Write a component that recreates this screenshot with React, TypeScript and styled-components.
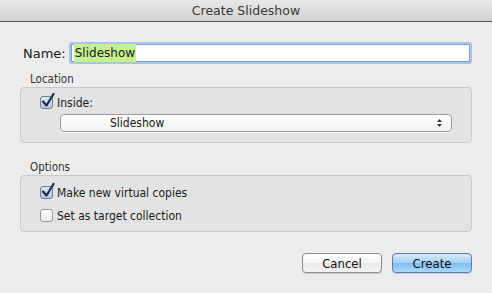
import { useState } from "react";
import styled, { createGlobalStyle } from "styled-components";

const GlobalStyle = createGlobalStyle`
  html, body {
    margin: 0;
    padding: 0;
    background: #ececec;
  }
  body {
    font-family: "DejaVu Sans Condensed", "Liberation Sans", sans-serif;
    font-size: 12px;
    color: #1a1a1a;
  }
`;

const Window = styled.div`
  width: 492px;
  height: 293px;
  background: #ececec;
  display: flex;
  flex-direction: column;
  overflow: hidden;
`;

const TitleBar = styled.div`
  height: 21px;
  border-bottom: 1px solid #555;
  background: linear-gradient(#e9e9e9, #d2d2d2);
  display: flex;
  align-items: center;
  justify-content: center;
  font-family: "DejaVu Sans", sans-serif;
  font-size: 12.5px;
  color: #3a3a3a;
`;

const Body = styled.div`
  padding: 20px 20px 0 20px;
  display: flex;
  flex-direction: column;
`;

const NameRow = styled.div`
  display: flex;
  align-items: center;
  gap: 5px;
  padding-left: 3px;
  height: 22px;
`;

const NameLabel = styled.label`
  font-family: "DejaVu Sans", sans-serif;
  font-size: 13px;
`;

const NameInput = styled.div`
  flex: 1;
  height: 18px;
  box-sizing: border-box;
  border: 1px solid #7d9dc8;
  box-shadow: 0 0 0 2px #a9c4e7;
  border-radius: 1px;
  background: #fff;
  display: flex;
  align-items: center;
  padding: 0 2px;
  margin-right: 2px;
  font-family: "DejaVu Sans", sans-serif;
  font-size: 12px;
`;

const Selected = styled.span`
  background: #c5f28e;
  padding: 0 1px;
  line-height: 18px;
`;

const GroupLabel = styled.div<{ $gap: number }>`
  margin: ${(p) => p.$gap}px 0 0 10px;
  font-size: 11.5px;
  color: #333;
  line-height: 14px;
`;

const GroupBox = styled.div<{ $height: number; $gap: number; $top: number }>`
  margin-top: 1px;
  height: ${(p) => p.$height}px;
  box-sizing: border-box;
  border: 1px solid #c9c9c9;
  border-radius: 4px;
  background: #e3e3e3;
  padding: ${(p) => p.$top}px 19px 0 19px;
  display: flex;
  flex-direction: column;
  gap: ${(p) => p.$gap}px;
`;

const CheckRow = styled.label`
  display: flex;
  align-items: center;
  gap: 4px;
  height: 17px;
  font-size: 12px;
  cursor: default;
`;

const Box = styled.span<{ $on: boolean }>`
  position: relative;
  width: 13px;
  height: 13px;
  box-sizing: border-box;
  border: 1px solid ${(p) => (p.$on ? "#6f8199" : "#9a9a9a")};
  border-radius: 3px;
  background: ${(p) =>
    p.$on
      ? "linear-gradient(#dbe7f5, #b5c9e2)"
      : "linear-gradient(#ffffff, #ececec)"};
  flex-shrink: 0;
`;

const Tick = styled.svg`
  position: absolute;
  left: 0px;
  top: -4px;
  width: 14px;
  height: 15px;
  overflow: visible;
`;

const Select = styled.div`
  margin-left: 20px;
  height: 18px;
  box-sizing: border-box;
  border: 1px solid #9c9c9c;
  border-radius: 4px;
  background: linear-gradient(#ffffff, #f1f1f1);
  display: flex;
  align-items: center;
  padding-left: 49px;
  padding-right: 8px;
  font-size: 12px;
  box-shadow: 0 1px 0 rgba(255, 255, 255, 0.6);
`;

const SelectText = styled.span`
  flex: 1;
`;

const Footer = styled.div`
  display: flex;
  justify-content: flex-end;
  gap: 10px;
  margin-top: 21px;
`;

const Button = styled.button<{ $primary?: boolean }>`
  width: 80px;
  height: 20px;
  box-sizing: border-box;
  border-radius: 4px;
  font-family: inherit;
  font-size: 13px;
  color: #111;
  padding: 0;
  border: 1px solid ${(p) => (p.$primary ? "#5b7fae" : "#8c8c8c")};
  background: ${(p) =>
    p.$primary
      ? "linear-gradient(#d6ebfc 0%, #a3d0f4 50%, #7fbcec 51%, #a9d8fb 100%)"
      : "linear-gradient(#ffffff 0%, #f4f4f4 50%, #e8e8e8 51%, #f4f4f4 100%)"};
  box-shadow: 0 1px 1px rgba(0, 0, 0, 0.15);
`;

const Check = ({ on, label, onToggle }: { on: boolean; label: string; onToggle: () => void }) => (
  <CheckRow onClick={onToggle}>
    <Box $on={on}>
      {on && (
        <Tick viewBox="0 0 14 15">
          <path
            d="M2 8.5 L5.5 12.5 L12.5 1"
            fill="none"
            stroke="#1d2c4c"
            strokeWidth="2.2"
            strokeLinecap="round"
            strokeLinejoin="round"
          />
        </Tick>
      )}
    </Box>
    {label}
  </CheckRow>
);

const App = () => {
  const [inside, setInside] = useState(true);
  const [copies, setCopies] = useState(true);
  const [target, setTarget] = useState(false);

  return (
    <Window>
      <GlobalStyle />
      <TitleBar>Create Slideshow</TitleBar>
      <Body>
        <NameRow>
          <NameLabel>Name:</NameLabel>
          <NameInput>
            <Selected>Slideshow</Selected>
          </NameInput>
        </NameRow>

        <GroupLabel $gap={8}>Location</GroupLabel>
        <GroupBox $height={56} $gap={3} $top={6}>
          <Check on={inside} label="Inside:" onToggle={() => setInside(!inside)} />
          <Select>
            <SelectText>Slideshow</SelectText>
            <svg width="7" height="10" viewBox="0 0 7 10">
              <path d="M1 4 L3.5 1 L6 4 Z" fill="#333" />
              <path d="M1 6 L3.5 9 L6 6 Z" fill="#333" />
            </svg>
          </Select>
        </GroupBox>

        <GroupLabel $gap={17}>Options</GroupLabel>
        <GroupBox $height={57} $gap={6} $top={8}>
          <Check on={copies} label="Make new virtual copies" onToggle={() => setCopies(!copies)} />
          <Check on={target} label="Set as target collection" onToggle={() => setTarget(!target)} />
        </GroupBox>

        <Footer>
          <Button>Cancel</Button>
          <Button $primary>Create</Button>
        </Footer>
      </Body>
    </Window>
  );
};

export default App;
